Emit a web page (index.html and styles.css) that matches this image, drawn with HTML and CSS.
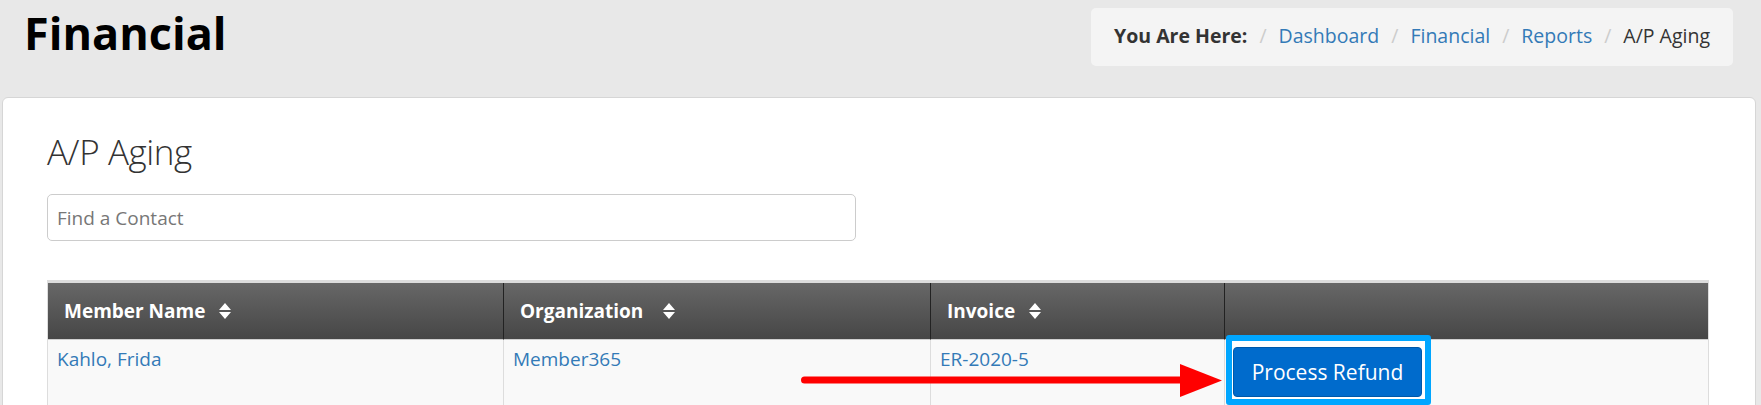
FILE: index.html
```html
<!DOCTYPE html>
<html lang="en">
<head>
<meta charset="utf-8">
<title>Financial - A/P Aging</title>
<link rel="stylesheet" href="styles.css">
</head>
<body>
<header class="page-header">
  <h1 class="page-title">Financial</h1>
  <nav class="breadcrumb">
    <span class="crumb-label">You Are Here:</span>
    <span class="crumb-sep">/</span>
    <a class="crumb-link" href="#">Dashboard</a>
    <span class="crumb-sep">/</span>
    <a class="crumb-link" href="#">Financial</a>
    <span class="crumb-sep">/</span>
    <a class="crumb-link" href="#">Reports</a>
    <span class="crumb-sep">/</span>
    <span class="crumb-current">A/P Aging</span>
  </nav>
</header>

<main class="card">
  <h2 class="card-title">A/P Aging</h2>
  <input class="search" type="text" placeholder="Find a Contact">

  <div class="grid-table">
    <div class="th">Member Name <svg class="sort" viewBox="0 0 12 16"><path d="M0 7 L6 0 L12 7 Z M0 9 L12 9 L6 16 Z" fill="#fff"/></svg></div>
    <div class="th th-sep">Organization <svg class="sort sort-wide" viewBox="0 0 12 16"><path d="M0 7 L6 0 L12 7 Z M0 9 L12 9 L6 16 Z" fill="#fff"/></svg></div>
    <div class="th th-sep">Invoice <svg class="sort" viewBox="0 0 12 16"><path d="M0 7 L6 0 L12 7 Z M0 9 L12 9 L6 16 Z" fill="#fff"/></svg></div>
    <div class="th th-sep"></div>

    <div class="td"><a href="#">Kahlo, Frida</a></div>
    <div class="td td-sep"><a href="#">Member365</a></div>
    <div class="td td-sep"><a href="#">ER-2020-5</a></div>
    <div class="td td-sep td-action">
      <div class="btn-wrap">
        <span class="highlight"></span>
        <button class="btn-primary" type="button">Process Refund</button>
      </div>
    </div>

    <svg class="arrow" width="421" height="33" viewBox="0 0 421 33">
      <line x1="3.5" y1="16" x2="382" y2="16" stroke="#ff0000" stroke-width="7" stroke-linecap="round"/>
      <polygon points="379,0 421,16.5 379,33" fill="#ff0000"/>
    </svg>
  </div>
</main>
</body>
</html>
```

FILE: styles.css
```css
html, body {
  margin: 0;
  padding: 0;
  overflow: hidden;
}

body {
  background: #e8e8e8;
  font-family: "Open Sans", "Liberation Sans", sans-serif;
  color: #333;
  height: 405px;
}

a {
  color: #337ab7;
  text-decoration: none;
}

.page-header {
  display: flex;
  justify-content: space-between;
  align-items: flex-start;
  padding: 8px 28px 0 24px;
}

.page-title {
  margin: 0;
  font-size: 45px;
  line-height: 50px;
  font-weight: 700;
  color: #000;
}

.breadcrumb {
  display: flex;
  align-items: baseline;
  gap: 12px;
  background: #f4f4f4;
  border-radius: 5px;
  padding: 14px 23px 16px 23px;
  font-size: 19.5px;
  line-height: 28px;
}

.crumb-label {
  font-weight: 700;
  color: #333;
}

.crumb-sep {
  color: #ccc;
}

.crumb-current {
  color: #333;
}

.card {
  display: flex;
  flex-direction: column;
  align-items: flex-start;
  margin: 31px 5px 0 2px;
  background: #fff;
  border: 1px solid #d6d6d6;
  border-radius: 6px;
  padding: 34px 46px 0 44px;
  height: 400px;
}

.card-title {
  margin: 0;
  font-size: 35px;
  line-height: 40px;
  font-weight: 300;
  letter-spacing: -0.4px;
  color: #333;
}

.search {
  box-sizing: border-box;
  margin-top: 22px;
  width: 809px;
  height: 47px;
  border: 1px solid #ccc;
  border-radius: 5px;
  padding: 0 9px;
  font-family: inherit;
  font-size: 19px;
  color: #555;
  background: #fff;
}

.search::placeholder {
  color: #777;
}

.grid-table {
  position: relative;
  margin-top: 39px;
  align-self: stretch;
  display: grid;
  grid-template-columns: 455px 427px 294px 1fr;
  border: 1px solid #ddd;
  border-top: 3px solid #dcdcdc;
}

.th {
  box-sizing: border-box;
  display: flex;
  align-items: center;
  height: 57px;
  padding: 0 16px;
  background: linear-gradient(#676767, #464646);
  border-bottom: 1px solid #d0d0d0;
  color: #fff;
  font-weight: 700;
  font-size: 19px;
}

.th-sep {
  border-left: 1px solid #222;
}

.sort {
  width: 12px;
  height: 16px;
  margin-left: 14px;
}

.sort-wide {
  margin-left: 20px;
}

.td {
  box-sizing: border-box;
  background: #f9f9f9;
  padding: 6px 9px;
  font-size: 19px;
  line-height: 27px;
  height: 80px;
}

.td-sep {
  border-left: 1px solid #ddd;
}

.td-action {
  padding: 7px 8px;
}

.btn-wrap {
  position: relative;
  display: inline-block;
}

.highlight {
  position: absolute;
  left: -7px;
  top: -12px;
  right: -9px;
  bottom: -8px;
  background: #fff;
  border: 6px solid #00a6ff;
  border-radius: 3px;
}

.btn-primary {
  position: relative;
  box-sizing: border-box;
  width: 189px;
  height: 50px;
  padding: 0 16px;
  background: #006bcc;
  border: 1px solid #0058a8;
  border-radius: 4px;
  color: #fff;
  font-family: inherit;
  font-size: 21px;
  line-height: 28px;
}

.arrow {
  position: absolute;
  left: 753px;
  top: 81px;
}
```
